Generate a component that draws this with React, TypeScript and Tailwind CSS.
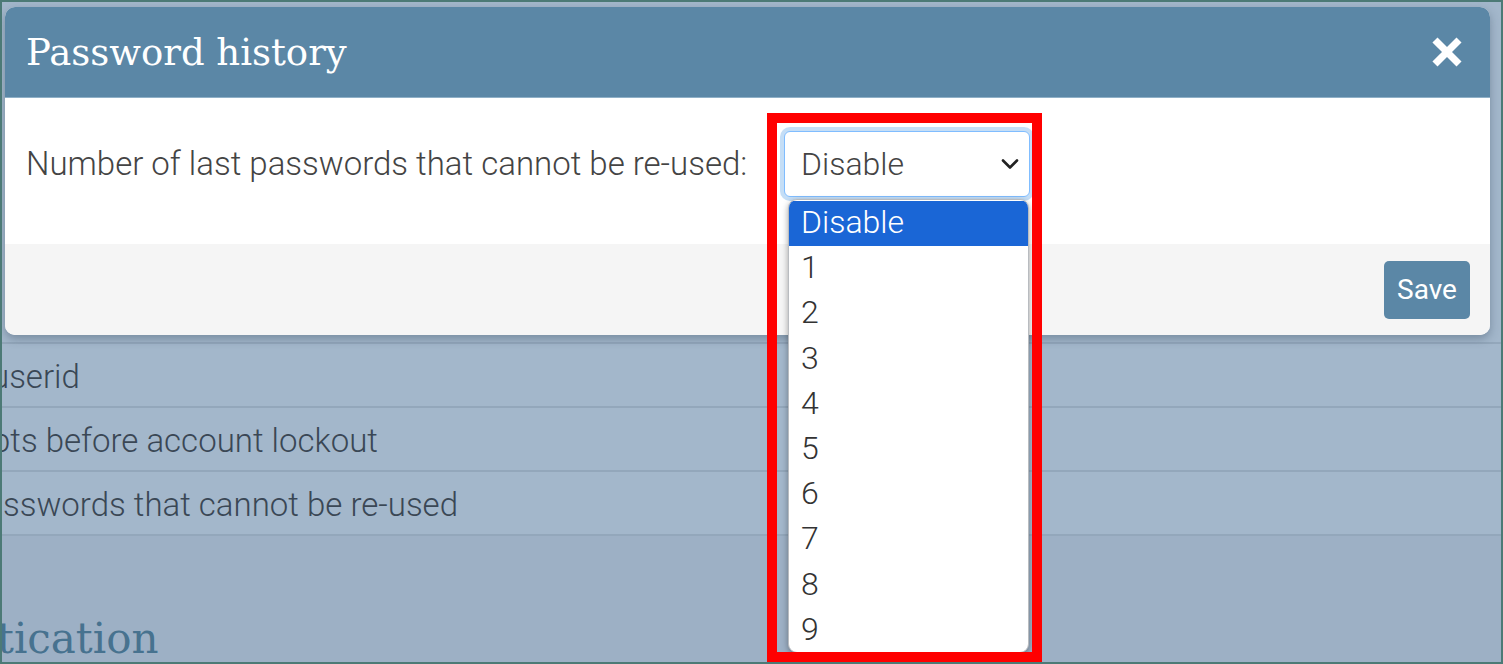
import { X } from 'lucide-react';

const options = ['Disable', '1', '2', '3', '4', '5', '6', '7', '8', '9'];

const rows = [
  { text: 'userid', shift: '-ml-[11px]' },
  { text: 'pts before account lockout', shift: '-ml-[10px]' },
  { text: 'sswords that cannot be re-used', shift: 'ml-[1px]' },
];

export default function App() {
  return (
    <div className="relative w-[1503px] h-[664px] overflow-hidden border-2 border-[#4c7a76] bg-[#a3b7cb] font-['Roboto',sans-serif]">
      {/* page behind the overlay */}
      <div className="pt-[340px]">
        {rows.map((r) => (
          <div
            key={r.text}
            className="h-[64px] border-t-2 border-[#93a7bb] flex items-center overflow-hidden pt-[3px]"
          >
            <span className={`${r.shift} text-[33px] font-light text-[#3a4755] whitespace-nowrap`}>{r.text}</span>
          </div>
        ))}
        <div className="border-t-2 border-[#93a7bb] h-[130px] bg-[#9db0c5] flex items-end overflow-hidden">
          <span className="-ml-[5px] font-['DejaVu_Serif',serif] text-[42px] leading-[50px] text-[#47728f] whitespace-nowrap">tication</span>
        </div>
      </div>

      {/* modal */}
      <div className="absolute left-[3px] top-[5px] w-[1485px] h-[328px] rounded-[10px] bg-white shadow-[0_4px_10px_rgba(40,60,80,0.35)] overflow-hidden flex flex-col">
        <div className="h-[91px] bg-[#5b87a6] border-b border-[#8fb0c7] flex items-center justify-between pl-[21px] pr-[24px]">
          <h1 className="font-['DejaVu_Serif',serif] text-[37px] text-white pt-[2px]">Password history</h1>
          <X className="w-[38px] h-[38px] text-white" strokeWidth={4.5} strokeLinecap="square" />
        </div>
        <div className="h-[146px] flex items-start pt-[47px] pl-[21px]">
          <span className="text-[33px] font-light text-[#444] leading-[38px]">
            Number of last passwords that cannot be re-used:
          </span>
        </div>
        <div className="flex-1 bg-[#f5f5f5] flex items-start justify-end pt-[17px] pr-[20px]">
          <button className="w-[86px] h-[58px] rounded-[5px] bg-[#5b87a6] text-white text-[28px] font-['Roboto',sans-serif]">
            Save
          </button>
        </div>
      </div>

      {/* select */}
      <div className="absolute left-[782px] top-[129px] w-[246px] h-[66px] rounded-[6px] border border-[#80bdff] bg-white shadow-[0_0_0_4px_rgba(90,160,230,0.35)] flex items-center justify-between pl-[16px] pr-[10px]">
        <span className="text-[32px] font-light text-[#444]">Disable</span>
        <svg width="18" height="12" viewBox="0 0 18 12" fill="none">
          <path d="M2 2.5 L9 9.5 L16 2.5" stroke="#222" strokeWidth="2.6" strokeLinecap="round" strokeLinejoin="round" />
        </svg>
      </div>

      {/* open list */}
      <div className="absolute left-[786px] top-[197px] w-[241px] h-[454px] rounded-[9px] border border-[#b9bcc0] bg-white shadow-[0_2px_6px_rgba(0,0,0,0.35)] overflow-hidden pt-[1px]">
        {options.map((o, i) => (
          <div
            key={o}
            className={`h-[45.2px] flex items-center pl-[12px] text-[32px] font-light pb-[3px] ${
              i === 0 ? 'bg-[#1a66d6] text-white' : 'text-[#333]'
            }`}
          >
            {o}
          </div>
        ))}
      </div>

      {/* highlight frame */}
      <div className="absolute left-[765px] top-[111px] w-[275px] h-[549px] border-[10px] border-[#ff0000] pointer-events-none" />
    </div>
  );
}
